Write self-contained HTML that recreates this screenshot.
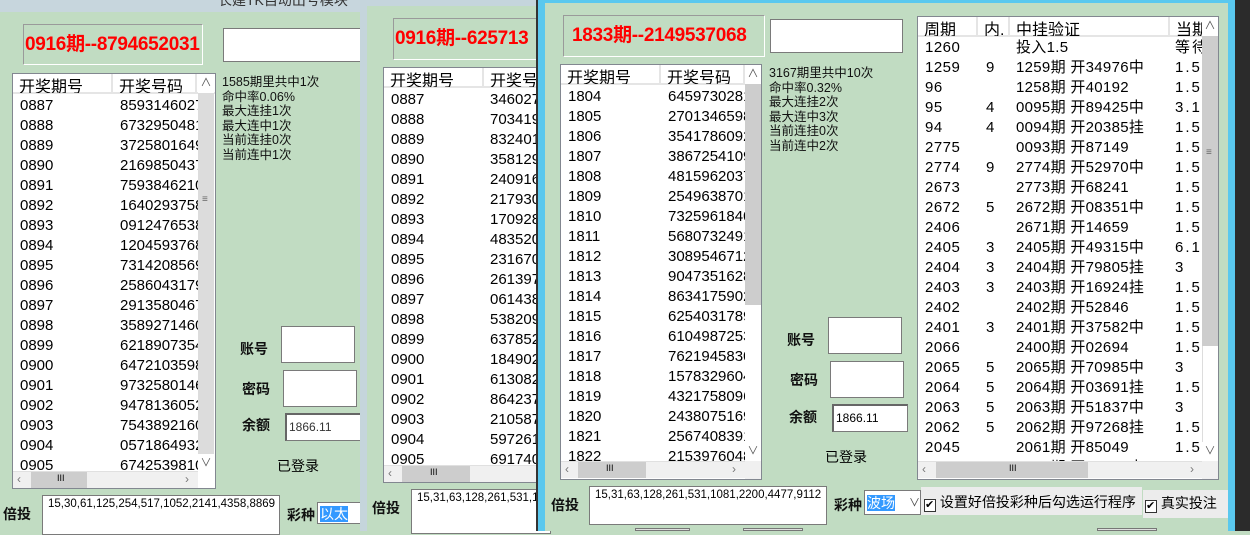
<!DOCTYPE html>
<html><head><meta charset="utf-8"><style>
*{margin:0;padding:0;box-sizing:border-box}
body{width:1250px;height:531px;overflow:hidden;position:relative;background:#c1dcc2;font-family:"Liberation Sans","Noto Sans CJK SC",sans-serif;}
.a{position:absolute}
.red{position:absolute;border:1px solid #9a9a9a;border-right-color:#fff;border-bottom-color:#fff;color:#f00;font-weight:bold;font-size:19px;white-space:nowrap;overflow:hidden;line-height:40px;font-family:"Liberation Sans","Noto Sans CJK SC",sans-serif;letter-spacing:-0.3px}
.box{position:absolute;background:#fff;border:1px solid #7a7a7a}
.list{position:absolute;background:#fff;border:1px solid #828790;overflow:hidden;font-size:15px;font-family:"Liberation Sans","Noto Sans CJK SC",sans-serif}
.hd{position:absolute;left:0;top:0;height:20px;right:0;border-bottom:2px solid #e5e5e5;background:#fff}
.hd span{position:absolute;top:-1px;border-right:2px solid #e5e5e5;height:20px;padding-left:6px;font-size:16px;white-space:nowrap;overflow:hidden}
.row{position:absolute;left:0;height:20px;white-space:nowrap;font-size:15px;line-height:20px}
.row span{position:absolute}
.vs{position:absolute;background:#dcdcdc;width:16px}
.hs{position:absolute;background:#f0f0f0;height:17px;border-top:1px solid #e0e0e0}
.st{position:absolute;font-size:12.5px;line-height:14.5px;color:#111;white-space:nowrap}
.lb{position:absolute;font-size:14px;font-weight:bold;color:#111;white-space:nowrap}
</style></head><body>

<!-- window 1 -->
<div class="a" style="left:0;top:0;width:362px;height:12px;background:#c7d6dd;overflow:hidden"><div class="a" style="left:218px;top:-10px;font-size:14px;color:#333">长建TK自动出号模块</div></div>
<div class="red" style="left:23px;top:24px;width:180px;height:41px;padding-left:1px">0916期--8794652031</div>
<div class="box" style="left:223px;top:28px;width:145px;height:34px"></div>

<div class="list" style="left:12px;top:73px;width:204px;height:416px">
 <div class="hd"><span style="left:0;width:100px">开奖期号</span><span style="left:100px;width:84px">开奖号码</span></div>
 <div id="l1"></div>
 <div class="vs" style="left:185px;top:0;height:380px"></div>
 <div class="a" style="left:185px;top:0;width:16px;height:19px;background:#fff;color:#555;font-size:11px;text-align:center;line-height:18px">∧</div>
 <div class="a" style="left:189px;top:120px;font-size:10px;color:#666">≡</div>
 <div class="a" style="left:185px;top:380px;width:16px;height:17px;background:#fff;color:#555;font-size:11px;text-align:center">∨</div>
 <div class="hs" style="left:0;top:397px;width:185px"><div class="a" style="left:18px;top:0;width:56px;height:16px;background:#cdcdcd"></div><div class="a" style="left:44px;top:1px;font-size:9px">III</div><div class="a" style="left:4px;top:0;font-size:12px;color:#777">‹</div><div class="a" style="left:172px;top:0;font-size:12px;color:#777">›</div></div>
</div>
<div class="st" style="left:222px;top:75px">1585期里共中1次<br>命中率0.06%<br>最大连挂1次<br>最大连中1次<br>当前连挂0次<br>当前连中1次</div>
<div class="lb" style="left:240px;top:339px">账号</div><div class="box" style="left:281px;top:326px;width:74px;height:37px"></div>
<div class="lb" style="left:242px;top:379px">密码</div><div class="box" style="left:283px;top:370px;width:74px;height:37px"></div>
<div class="lb" style="left:242px;top:415px">余额</div><div class="box" style="left:285px;top:413px;width:77px;height:28px;border-top:2px solid #666;border-left:2px solid #666;font-size:12px;padding:5px 0 0 2px;color:#333">1866.11</div>
<div class="a" style="left:277px;top:456px;font-size:14px">已登录</div>
<div class="lb" style="left:3px;top:504px">倍投</div>
<div class="box" style="left:42px;top:495px;width:238px;height:40px;font-size:11.5px;padding:2px 0 0 5px;white-space:nowrap;overflow:hidden">15,30,61,125,254,517,1052,2141,4358,8869</div>
<div class="lb" style="left:287px;top:505px">彩种</div>
<div class="box" style="left:317px;top:502px;width:45px;height:22px;font-size:14px;padding:1px 0 0 2px"><span style="background:#3399ff;color:#fff">以太</span></div>

<!-- window 2 -->
<div class="a" style="left:360px;top:0;width:178px;height:531px;background:#c5d5dc"></div>
<div class="a" style="left:367px;top:6px;width:169px;height:525px;background:#c1dcc2"></div>
<div class="red" style="left:393px;top:18px;width:160px;height:42px;padding-left:1px">0916期--625713</div>
<div class="list" style="left:383px;top:67px;width:170px;height:416px">
 <div class="hd"><span style="left:0;width:100px">开奖期号</span><span style="left:100px;width:84px">开奖号码</span></div>
 <div id="l2"></div>
 <div class="hs" style="left:0;top:397px;width:170px"><div class="a" style="left:18px;top:0;width:68px;height:16px;background:#cdcdcd"></div><div class="a" style="left:46px;top:1px;font-size:9px">III</div><div class="a" style="left:4px;top:0;font-size:12px;color:#777">‹</div></div>
</div>
<div class="lb" style="left:372px;top:498px">倍投</div>
<div class="box" style="left:411px;top:489px;width:140px;height:45px;font-size:11.5px;padding:2px 0 0 5px;white-space:nowrap;overflow:hidden">15,31,63,128,261,531,1081</div>
<div class="a" style="left:536px;top:0;width:2px;height:531px;background:#333"></div>

<!-- window 3 -->
<div class="a" style="left:538px;top:0;width:697px;height:531px;background:#5ac8ee"></div>
<div class="a" style="left:1235px;top:0;width:15px;height:531px;background:#2b2b2b"></div>
<div class="a" style="left:545px;top:3px;width:683px;height:528px;background:#c1dcc2"></div>
<div class="red" style="left:563px;top:15px;width:202px;height:42px;padding-left:8px">1833期--2149537068</div>
<div class="box" style="left:770px;top:19px;width:133px;height:34px"></div>
<div class="list" style="left:560px;top:64px;width:202px;height:416px">
 <div class="hd"><span style="left:0;width:100px">开奖期号</span><span style="left:100px;width:84px">开奖号码</span></div>
 <div id="l3"></div>
 <div class="vs" style="left:184px;top:19px;height:221px;background:#cdcdcd"></div>
 <div class="vs" style="left:184px;top:240px;height:137px;background:#fff"></div>
 <div class="a" style="left:184px;top:0;width:16px;height:19px;background:#fff;color:#555;font-size:11px;text-align:center;line-height:18px">∧</div>
 <div class="a" style="left:184px;top:377px;width:16px;height:19px;background:#fff;color:#555;font-size:11px;text-align:center">∨</div>
 <div class="hs" style="left:0;top:396px;width:184px"><div class="a" style="left:17px;top:0;width:68px;height:16px;background:#cdcdcd"></div><div class="a" style="left:45px;top:1px;font-size:9px">III</div><div class="a" style="left:4px;top:0;font-size:12px;color:#777">‹</div><div class="a" style="left:171px;top:0;font-size:12px;color:#777">›</div></div>
 <div class="a" style="left:184px;top:396px;width:16px;height:18px;background:#f0f0f0"></div>
</div>
<div class="st" style="left:769px;top:66px">3167期里共中10次<br>命中率0.32%<br>最大连挂2次<br>最大连中3次<br>当前连挂0次<br>当前连中2次</div>
<div class="lb" style="left:787px;top:330px">账号</div><div class="box" style="left:828px;top:317px;width:74px;height:37px"></div>
<div class="lb" style="left:790px;top:370px">密码</div><div class="box" style="left:830px;top:361px;width:74px;height:37px"></div>
<div class="lb" style="left:789px;top:407px">余额</div><div class="box" style="left:832px;top:404px;width:76px;height:28px;border-top:2px solid #666;border-left:2px solid #666;font-size:12px;padding:5px 0 0 2px">1866.11</div>
<div class="a" style="left:825px;top:447px;font-size:14px">已登录</div>

<div class="list" style="left:917px;top:16px;width:302px;height:464px">
 <div class="hd"><span style="left:0;width:60px">周期</span><span style="left:60px;width:32px">内.</span><span style="left:92px;width:160px">中挂验证</span><span style="left:252px;width:40px">当期</span></div>
 <div id="l4"></div>
 <div class="vs" style="left:284px;top:19px;height:310px;background:#cdcdcd"></div>
 <div class="vs" style="left:284px;top:329px;height:96px;background:#fff;border-left:1px solid #ddd"></div>
 <div class="a" style="left:284px;top:0;width:16px;height:19px;background:#fff;color:#555;font-size:11px;text-align:center;line-height:18px">∧</div>
 <div class="a" style="left:288px;top:130px;font-size:10px;color:#666">≡</div>
 <div class="a" style="left:284px;top:425px;width:16px;height:19px;background:#fff;color:#555;font-size:11px;text-align:center">∨</div>
 <div class="hs" style="left:0;top:444px;width:284px"><div class="a" style="left:18px;top:0;width:152px;height:16px;background:#cdcdcd"></div><div class="a" style="left:91px;top:1px;font-size:9px">III</div><div class="a" style="left:4px;top:0;font-size:12px;color:#777">‹</div><div class="a" style="left:272px;top:0;font-size:12px;color:#777">›</div></div>
 <div class="a" style="left:284px;top:444px;width:16px;height:18px;background:#f0f0f0"></div>
</div>

<div class="lb" style="left:551px;top:495px">倍投</div>
<div class="box" style="left:589px;top:486px;width:238px;height:39px;font-size:11.5px;padding:2px 0 0 5px;white-space:nowrap;overflow:hidden">15,31,63,128,261,531,1081,2200,4477,9112</div>
<div class="lb" style="left:834px;top:495px">彩种</div>
<div class="box" style="left:864px;top:490px;width:57px;height:25px;font-size:14px;padding:2px 0 0 2px"><span style="background:#3399ff;color:#fff">波场</span><span class="a" style="left:44px;top:3px;font-size:11px;color:#444">∨</span></div>
<div class="a" style="left:921px;top:487px;width:221px;height:28px;background:#ececec;font-size:14px;white-space:nowrap;padding:5px 0 0 3px"><span style="display:inline-block;width:12px;height:13px;border:1px solid #333;background:#fff;font-size:11px;line-height:11px;vertical-align:-1px">✔</span> 设置好倍投彩种后勾选运行程序</div>
<div class="a" style="left:1143px;top:490px;width:85px;height:28px;background:#ececec;font-size:14px;white-space:nowrap;padding:3px 0 0 2px"><span style="display:inline-block;width:12px;height:13px;border:1px solid #333;background:#fff;font-size:11px;line-height:11px;vertical-align:-1px">✔</span> 真实投注</div>
<div class="a" style="left:635px;top:528px;width:55px;height:3px;background:#e0e0e0;border:1px solid #777"></div>
<div class="a" style="left:743px;top:528px;width:60px;height:3px;background:#e0e0e0;border:1px solid #777"></div>
<div class="a" style="left:1097px;top:528px;width:60px;height:3px;background:#e0e0e0;border:1px solid #777"></div>

<script>
function fill(id,ids,codes,c2){var h='';for(var i=0;i<ids.length;i++){h+='<div class="row" style="top:'+(22+i*20)+'px"><span style="left:7px">'+ids[i]+'</span><span style="left:'+c2+'px">'+codes[i]+'</span></div>';}document.getElementById(id).innerHTML=h;}
var a=[];for(var i=887;i<=905;i++)a.push('0'+i);
fill('l1',a,'8593146027 6732950481 3725801649 2169850437 7593846210 1640293758 0912476538 1204593768 7314208569 2586043179 2913580467 3589271460 6218907354 6472103598 9732580146 9478136052 7543892160 0571864932 6742539810'.split(' '),107);
fill('l2',a,'346027 703419 832401 358129 240916 217930 170928 483520 231670 261397 061438 538209 637852 184902 613082 864237 210587 597261 691740'.split(' '),106);
var b=[];for(var i=1804;i<=1822;i++)b.push(''+i);
fill('l3',b,'6459730281 2701346598 3541786092 3867254109 4815962037 2549638701 7325961840 5680732491 3089546712 9047351628 8634175902 6254031789 6104987253 7621945830 1578329604 4321758096 2438075169 2567408391 2153976048'.split(' '),107);
var r=[['1260','','投入1.5','等待'],['1259','9','1259期 开34976中','1.5'],['96','','1258期 开40192','1.5'],['95','4','0095期 开89425中','3.1'],['94','4','0094期 开20385挂','1.5'],['2775','','0093期 开87149','1.5'],['2774','9','2774期 开52970中','1.5'],['2673','','2773期 开68241','1.5'],['2672','5','2672期 开08351中','1.5'],['2406','','2671期 开14659','1.5'],['2405','3','2405期 开49315中','6.1'],['2404','3','2404期 开79805挂','3'],['2403','3','2403期 开16924挂','1.5'],['2402','','2402期 开52846','1.5'],['2401','3','2401期 开37582中','1.5'],['2066','','2400期 开02694','1.5'],['2065','5','2065期 开70985中','3'],['2064','5','2064期 开03691挂','1.5'],['2063','5','2063期 开51837中','3'],['2062','5','2062期 开97268挂','1.5'],['2045','','2061期 开85049','1.5'],['2044','','2060期 开13572中','1.5']];
var h='';for(var i=0;i<r.length;i++){h+='<div class="row" style="top:'+(21+i*20)+'px"><span style="left:7px;letter-spacing:0.5px">'+r[i][0]+'</span><span style="left:68px">'+r[i][1]+'</span><span style="left:98px;letter-spacing:0.3px">'+r[i][2]+'</span><span style="left:257px;letter-spacing:2px">'+r[i][3]+'</span></div>';}
document.getElementById('l4').innerHTML=h;
</script>
</body></html>
